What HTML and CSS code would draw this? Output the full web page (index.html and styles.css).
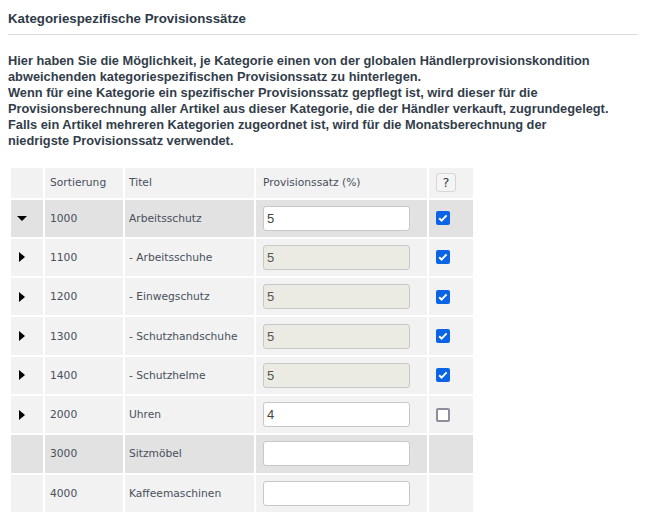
FILE: index.html
```html
<!DOCTYPE html>
<html lang="de">
<head>
<meta charset="utf-8">
<link rel="stylesheet" href="styles.css">
</head>
<body>
<div class="page">
  <h2 class="title">Kategoriespezifische Provisionssätze</h2>
  <p class="intro">Hier haben Sie die Möglichkeit, je Kategorie einen von der globalen Händlerprovisionskondition abweichenden kategoriespezifischen Provisionssatz zu hinterlegen.<br>Wenn für eine Kategorie ein spezifischer Provisionssatz gepflegt ist, wird dieser für die Provisionsberechnung aller Artikel aus dieser Kategorie, die der Händler verkauft, zugrundegelegt.<br>Falls ein Artikel mehreren Kategorien zugeordnet ist, wird für die Monatsberechnung der<br>niedrigste Provisionssatz verwendet.</p>
  <table class="grid">
    <thead>
      <tr class="head">
        <th class="c-tog"></th>
        <th class="c-sort">Sortierung</th>
        <th class="c-title">Titel</th>
        <th class="c-rate">Provisionssatz (%)</th>
        <th class="c-chk"><span class="help">?</span></th>
      </tr>
    </thead>
    <tbody>
      <tr class="dark">
        <td class="c-tog"><svg class="tri down" width="10" height="5" viewBox="0 0 10 5"><path d="M0 0h10L5 5z"/></svg></td>
        <td class="c-sort">1000</td><td class="c-title">Arbeitsschutz</td>
        <td class="c-rate"><input class="inp" type="text" value="5"></td>
        <td class="c-chk"><span class="cb on"><svg width="14" height="14" viewBox="0 0 14 14"><path d="M3.2 7.2l2.4 2.4 5-5.2" fill="none" stroke="#fff" stroke-width="2"/></svg></span></td>
      </tr>
      <tr>
        <td class="c-tog"><svg class="tri right" width="6" height="10" viewBox="0 0 6 10"><path d="M0 0v10L6 5z"/></svg></td>
        <td class="c-sort">1100</td><td class="c-title">- Arbeitsschuhe</td>
        <td class="c-rate"><input class="inp" type="text" value="5" disabled></td>
        <td class="c-chk"><span class="cb on"><svg width="14" height="14" viewBox="0 0 14 14"><path d="M3.2 7.2l2.4 2.4 5-5.2" fill="none" stroke="#fff" stroke-width="2"/></svg></span></td>
      </tr>
      <tr>
        <td class="c-tog"><svg class="tri right" width="6" height="10" viewBox="0 0 6 10"><path d="M0 0v10L6 5z"/></svg></td>
        <td class="c-sort">1200</td><td class="c-title">- Einwegschutz</td>
        <td class="c-rate"><input class="inp" type="text" value="5" disabled></td>
        <td class="c-chk"><span class="cb on"><svg width="14" height="14" viewBox="0 0 14 14"><path d="M3.2 7.2l2.4 2.4 5-5.2" fill="none" stroke="#fff" stroke-width="2"/></svg></span></td>
      </tr>
      <tr>
        <td class="c-tog"><svg class="tri right" width="6" height="10" viewBox="0 0 6 10"><path d="M0 0v10L6 5z"/></svg></td>
        <td class="c-sort">1300</td><td class="c-title">- Schutzhandschuhe</td>
        <td class="c-rate"><input class="inp" type="text" value="5" disabled></td>
        <td class="c-chk"><span class="cb on"><svg width="14" height="14" viewBox="0 0 14 14"><path d="M3.2 7.2l2.4 2.4 5-5.2" fill="none" stroke="#fff" stroke-width="2"/></svg></span></td>
      </tr>
      <tr>
        <td class="c-tog"><svg class="tri right" width="6" height="10" viewBox="0 0 6 10"><path d="M0 0v10L6 5z"/></svg></td>
        <td class="c-sort">1400</td><td class="c-title">- Schutzhelme</td>
        <td class="c-rate"><input class="inp" type="text" value="5" disabled></td>
        <td class="c-chk"><span class="cb on"><svg width="14" height="14" viewBox="0 0 14 14"><path d="M3.2 7.2l2.4 2.4 5-5.2" fill="none" stroke="#fff" stroke-width="2"/></svg></span></td>
      </tr>
      <tr>
        <td class="c-tog"><svg class="tri right" width="6" height="10" viewBox="0 0 6 10"><path d="M0 0v10L6 5z"/></svg></td>
        <td class="c-sort">2000</td><td class="c-title">Uhren</td>
        <td class="c-rate"><input class="inp" type="text" value="4"></td>
        <td class="c-chk"><span class="cb"></span></td>
      </tr>
      <tr class="dark">
        <td class="c-tog"></td>
        <td class="c-sort">3000</td><td class="c-title">Sitzmöbel</td>
        <td class="c-rate"><input class="inp" type="text" value=""></td>
        <td class="c-chk"></td>
      </tr>
      <tr>
        <td class="c-tog"></td>
        <td class="c-sort">4000</td><td class="c-title">Kaffeemaschinen</td>
        <td class="c-rate"><input class="inp" type="text" value=""></td>
        <td class="c-chk"></td>
      </tr>
    </tbody>
  </table>
</div>
</body>
</html>
```
FILE: styles.css
```css
html, body {
  margin: 0;
  padding: 0;
  background: #fff;
}
.page {
  padding: 8px 8px 0 8px;
  font-family: "Liberation Sans", Arial, sans-serif;
  color: #333d4a;
}
.title {
  margin: 0;
  font-size: 13.3px;
  font-weight: bold;
  line-height: 20px;
  padding: 1px 0 5px 0;
  border-bottom: 1px solid #dddddd;
  color: #2f3a47;
}
.intro {
  margin: 18px 0 0 0;
  font-size: 12.8px;
  font-weight: bold;
  line-height: 16px;
}
.grid {
  margin: 17px 0 0 1px;
  border-collapse: separate;
  border-spacing: 2px;
  font-family: "DejaVu Sans", Verdana, sans-serif;
  font-size: 10.7px;
  color: #48505c;
}
.grid th, .grid td {
  background: #f2f2f2;
  text-align: left;
  font-weight: normal;
  height: 37.3px;
  padding: 0;
  vertical-align: middle;
  box-sizing: border-box;
}
.grid .head th {
  height: 29.5px;
}
.grid tr.dark td {
  background: #e2e2e2;
}
.grid .c-tog { width: 32px; padding-left: 6px; }
.grid .c-sort { width: 78px; padding-left: 5px; }
.grid .c-title { width: 129px; padding-left: 4px; }
.grid .c-rate { width: 171px; padding-left: 7px; }
.grid .c-chk { width: 44px; padding-left: 7px; }
.tri { display: block; fill: #000; }
.tri.right { margin-left: 2px; }
.help {
  display: flex;
  align-items: center;
  justify-content: center;
  width: 20px;
  height: 19px;
  border: 1px solid #d6d6d6;
  border-radius: 3px;
  background: #f5f5f5;
  font-size: 13px;
  color: #3a3f47;
  box-sizing: border-box;
  font-family: "DejaVu Sans", sans-serif;
}
.inp {
  display: block;
  box-sizing: border-box;
  width: 147px;
  height: 25px;
  margin: 0;
  padding: 0 3px;
  border: 1px solid #c8c8c8;
  border-radius: 3px;
  background: #fff;
  font-family: "Liberation Sans", Arial, sans-serif;
  font-size: 13px;
  color: #444;
}
.inp:disabled {
  background: #ebebe4;
  color: #555;
}
.cb {
  display: block;
  box-sizing: border-box;
  width: 14px;
  height: 14px;
  border: 2px solid #8f8d9c;
  border-radius: 2px;
  background: #fff;
}
.cb.on {
  border: none;
  background: #0b63e6;
}
.cb svg { display: block; }
```
